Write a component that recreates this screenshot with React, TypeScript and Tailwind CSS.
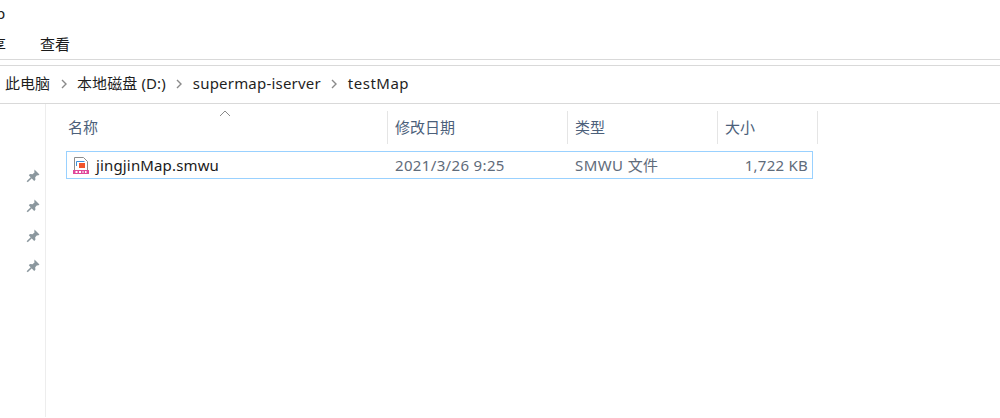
import React, { FC } from "react";

const font = "font-['Noto_Sans','Noto_Sans_CJK_SC',sans-serif]";

const Chevron: FC = () => (
  <svg width="8" height="10" viewBox="0 0 8 10" className="mt-[1px]">
    <path d="M2 1l4 4-4 4" fill="none" stroke="#8a8a8a" strokeWidth="1.4" />
  </svg>
);

const Pin: FC = () => (
  <svg width="14" height="14" viewBox="0 0 14 14">
    <path d="M8.500 .5l5 5-1.500 1-1-.2-1.800 2 .2 2.500-1.200 1.200L2.800 6.300 4 5.100l2.500.2 2-1.800-.2-1z" fill="#8b979e" />
    <path d="M5.500 8.500L1.200 12.800" stroke="#8b979e" strokeWidth="1.600" />
  </svg>
);

const FileIcon: FC = () => (
  <svg width="16" height="17" viewBox="0 0 16 17">
    <path d="M1.500 13V.5h9l4 4V13" fill="#fff" stroke="#8d8d8d" />
    <path d="M3.500 9V4.500h8" fill="none" stroke="#3d8fd8" />
    <rect x="6" y="6" width="6" height="5" fill="#f2552c" />
    <rect y="13" width="16" height="4" fill="#e0489a" />
    <path d="M2.500 15h2M6 15h2M9.500 15h1M12 15h1.500" stroke="#fff" strokeWidth="2" />
  </svg>
);

const columns = [
  { name: "修改日期", width: "w-[180px]" },
  { name: "类型", width: "w-[150px]" },
  { name: "大小", width: "w-[100px]" },
];

export default function App() {
  return (
    <div className={`${font} h-[418px] w-[1000px] overflow-hidden bg-white text-[15px] text-[#1a1a1a]`}>
      <div className="h-[30px] pt-[2px] -ml-[4px] leading-[22px]">p</div>

      <div className="flex h-[30px] items-center border-b border-[#d9d9d9]">
        <span className="-ml-[9px] w-[49px]">享</span>
        <span>查看</span>
      </div>

      <div className="mt-[5px] flex h-[39px] items-center gap-[9.500px] border-y border-[#d9d9d9] pb-[2px] pl-[5px] text-[#1f1f1f]">
        <span>此电脑</span>
        <Chevron />
        <span className="tracking-[0.1px]">本地磁盘 (D:)</span>
        <Chevron />
        <span className="tracking-[0.2px]">supermap-iserver</span>
        <Chevron />
        <span className="tracking-[0.5px]">testMap</span>
      </div>

      <div className="flex h-[313px]">
        <div className="flex w-[46px] shrink-0 flex-col items-center gap-[16px] border-r border-[#ededed] pt-[65px] pl-[20px]">
          <Pin />
          <Pin />
          <Pin />
          <Pin />
        </div>

        <div className="flex-1 pl-[20px]">
          <div className="relative mt-[7px] flex h-[33px] text-[#4c607a]">
            <svg width="12" height="7" viewBox="0 0 12 7" className="absolute left-[153px] -top-[1px]">
              <path d="M1 6l5-5 5 5" fill="none" stroke="#8a8a8a" />
            </svg>
            <div className="flex w-[322px] items-center border-r border-[#e5e5e5] pl-[2px]">名称</div>
            {columns.map((c) => (
              <div key={c.name} className={`flex ${c.width} items-center border-r border-[#e5e5e5] pl-[7px]`}>
                {c.name}
              </div>
            ))}
          </div>

          <div className="mt-[7px] flex h-[28px] w-[747px] items-center border border-[#99d1ff] text-[#5f6b7a]">
            <div className="flex w-[320px] items-center gap-[7px] pl-[6px] text-[#1a1a1a]">
              <FileIcon />
              <span className="tracking-[0.15px]">jingjinMap.smwu</span>
            </div>
            <div className="w-[180px] pl-[8px] tracking-[0.35px]">2021/3/26 9:25</div>
            <div className="w-[150px] pl-[8px] tracking-[0.4px]">SMWU 文件</div>
            <div className="flex-1 pr-[4px] text-right tracking-[0.25px]">1,722 KB</div>
          </div>
        </div>
      </div>
    </div>
  );
}
